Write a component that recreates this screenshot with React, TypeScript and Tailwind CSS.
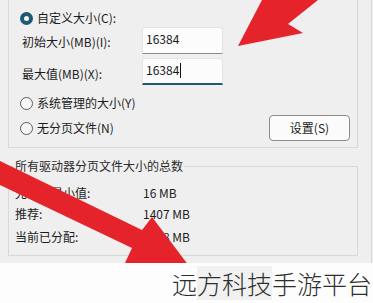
import React from 'react'

const font = { fontFamily: '"Noto Sans CJK SC", "Noto Sans", sans-serif' }

function Radio({ checked }: { checked?: boolean }) {
  if (checked) {
    return (
      <span className="flex h-[13px] w-[13px] shrink-0 items-center justify-center rounded-full bg-[#1b5a72]">
        <span className="h-[5px] w-[5px] rounded-full bg-[#f4f4f4]" />
      </span>
    )
  }
  return <span className="h-[13px] w-[13px] shrink-0 rounded-full border border-[#5c5c5c] bg-[#f6f6f6]" />
}

function NumberInput({ value, focused }: { value: string; focused?: boolean }) {
  return (
    <div
      className={
        'flex h-[27px] w-[81px] items-start rounded-t-[3px] border border-[#e4e4e4] bg-[#fcfcfc] pl-[3px] pt-[3px] ' +
        (focused ? 'border-b-2 border-b-[#1b5a72]' : 'border-b-[#8a8a8a]')
      }
    >
      <span className="text-[12px] leading-[16px] text-[#1a1a1a]">{value}</span>
      {focused && <span className="ml-[1px] mt-[1px] h-[15px] w-px bg-[#111]" />}
    </div>
  )
}

export default function App() {
  return (
    <div className="relative h-[303px] w-[373px] overflow-hidden bg-[#efefef] text-[#1c1c1c]" style={font}>
      <div className="flex h-[263px] w-[372px] flex-col border-r border-[#d6d6d6]">
        {/* custom size group */}
        <div className="ml-[8px] flex h-[148px] w-[350px] flex-col border-x border-b border-[#d8d8d8] pt-[9px]">
          <div className="flex h-[18px] items-center gap-[4px] pl-[11px] text-[12px]">
            <Radio checked />
            <span>自定义大小(C):</span>
          </div>
          <div className="flex h-[27px] items-start pl-[13px] text-[12px]">
            <span className="mt-[6px] w-[120px]">初始大小(MB)(I):</span>
            <NumberInput value="16384" />
          </div>
          <div className="mt-[4px] flex h-[27px] items-start pl-[13px] text-[12px]">
            <span className="mt-[7px] w-[120px]">最大值(MB)(X):</span>
            <NumberInput value="16384" focused />
          </div>
          <div className="mt-[9px] flex h-[18px] items-center gap-[4px] pl-[11px] text-[12px]">
            <Radio />
            <span>系统管理的大小(Y)</span>
          </div>
          <div className="mt-[3px] flex h-[26px] items-center pl-[11px] pr-[7px] text-[12px]">
            <Radio />
            <span className="ml-[4px]">无分页文件(N)</span>
            <button className="ml-auto h-[26px] w-[81px] rounded-[4px] border border-[#8c8c8c] bg-[#fbfbfb] text-[12px]">
              设置(S)
            </button>
          </div>
        </div>

        {/* totals group */}
        <fieldset className="ml-[8px] mt-[10px] h-[98px] w-[350px] border border-[#d8d8d8] pl-[6px] text-[12px]">
          <legend className="ml-[-1px] px-[1px] leading-[16px] text-[#2a2a2a]">所有驱动器分页文件大小的总数</legend>
          <div className="mt-[11px] flex flex-col gap-[5px]">
            <div className="flex h-[16px] items-center">
              <span className="w-[128px]">允许的最小值:</span>
              <span>16 MB</span>
            </div>
            <div className="flex h-[16px] items-center">
              <span className="w-[128px]">推荐:</span>
              <span>1407 MB</span>
            </div>
            <div className="mt-[2px] flex h-[16px] items-center">
              <span className="w-[128px]">当前已分配:</span>
              <span>2048 MB</span>
            </div>
          </div>
        </fieldset>
      </div>

      {/* red arrows */}
      <svg className="pointer-events-none absolute left-0 top-0" width="373" height="303" viewBox="0 0 373 303">
        <polygon points="262,0 318,0 288,24 303,33 238,46" fill="#e5232a" />
        <polygon points="0,161 142,230 152,217 192,270 125,263 132,248 0,185" fill="#e5232a" />
      </svg>

      {/* watermark band */}
      <div className="relative flex h-[40px] items-start justify-end bg-[#fdfdfd] pr-[1px]">
        <div className="mt-[3px] flex text-[25px] font-light leading-[34px] text-[#2e2e2e]">
          <span>远</span>
          <span className="bg-[#f1f1f1]">方科技</span>
          <span>手游平台</span>
        </div>
      </div>
    </div>
  )
}
